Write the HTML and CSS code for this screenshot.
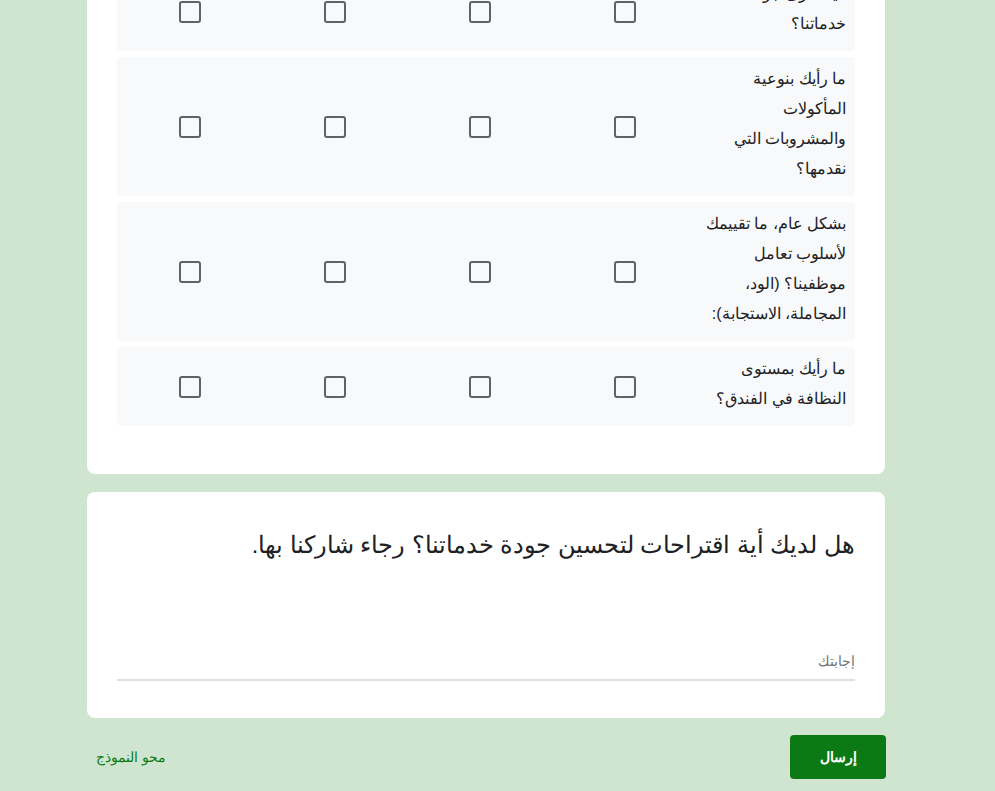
FILE: index.html
```html
<!DOCTYPE html>
<html lang="ar" dir="rtl">
<head>
<meta charset="utf-8">
<title>استبيان</title>
<link rel="stylesheet" href="styles.css">
</head>
<body>
<div class="page">
  <section class="card grid-card">
    <div class="row">
      <div class="label">كيف ترى جودة خدماتنا؟</div>
      <div class="cell"><span class="box"></span></div>
      <div class="cell"><span class="box"></span></div>
      <div class="cell"><span class="box"></span></div>
      <div class="cell"><span class="box"></span></div>
    </div>
    <div class="row">
      <div class="label">ما رأيك بنوعية المأكولات والمشروبات التي نقدمها؟</div>
      <div class="cell"><span class="box"></span></div>
      <div class="cell"><span class="box"></span></div>
      <div class="cell"><span class="box"></span></div>
      <div class="cell"><span class="box"></span></div>
    </div>
    <div class="row">
      <div class="label">بشكل عام، ما تقييمك لأسلوب تعامل موظفينا؟ (الود، المجاملة، الاستجابة):</div>
      <div class="cell"><span class="box"></span></div>
      <div class="cell"><span class="box"></span></div>
      <div class="cell"><span class="box"></span></div>
      <div class="cell"><span class="box"></span></div>
    </div>
    <div class="row">
      <div class="label">ما رأيك بمستوى النظافة في الفندق؟</div>
      <div class="cell"><span class="box"></span></div>
      <div class="cell"><span class="box"></span></div>
      <div class="cell"><span class="box"></span></div>
      <div class="cell"><span class="box"></span></div>
    </div>
  </section>

  <section class="card text-card">
    <h2 class="question">هل لديك أية اقتراحات لتحسين جودة خدماتنا؟ رجاء شاركنا بها.</h2>
    <input class="answer" type="text" placeholder="إجابتك">
  </section>

  <div class="footer">
    <button class="submit" type="button">إرسال</button>
    <a class="clear" href="#">محو النموذج</a>
  </div>
</div>
</body>
</html>
```
FILE: styles.css
```css
html, body {
  margin: 0;
  padding: 0;
}
body {
  background: #cfe5cf;
  font-family: "Liberation Sans", Arial, sans-serif;
  color: #202124;
  overflow: hidden;
}
.page {
  width: 798px;
  margin: -58px 110px 0 0;
}
.card {
  background: #fff;
  border-radius: 8px;
  box-sizing: border-box;
}
.grid-card {
  padding: 30px 30px 48px;
  display: flex;
  flex-direction: column;
  gap: 6px;
}
.row {
  display: grid;
  grid-template-columns: 158px repeat(4, 145px);
  background: #f8f9fa;
  border-radius: 4px;
}
.label {
  padding: 7px 9px 12px 5px;
  font-size: 16px;
  line-height: 30px;
  color: #202124;
}
.cell {
  display: flex;
  align-items: center;
  justify-content: center;
}
.box {
  display: block;
  width: 18px;
  height: 18px;
  border: 2px solid #5f6368;
  border-radius: 3px;
}
.text-card {
  margin-top: 18px;
  padding: 35px 30px 37px;
}
.question {
  margin: 0;
  font-size: 23.5px;
  font-weight: normal;
  line-height: 36px;
  color: #202124;
}
.answer {
  display: block;
  box-sizing: border-box;
  width: 100%;
  height: 38px;
  margin-top: 80px;
  border: none;
  border-bottom: 2px solid #e0e0e0;
  padding: 0;
  font-family: "Liberation Sans", Arial, sans-serif;
  font-size: 14px;
  background: transparent;
  outline: none;
}
.answer::placeholder {
  color: #70757a;
}
.footer {
  display: flex;
  justify-content: space-between;
  align-items: center;
  margin-top: 17px;
}
.submit {
  width: 96px;
  height: 44px;
  margin-right: -1px;
  background: #0b7a15;
  color: #fff;
  border: none;
  border-radius: 4px;
  font-family: "Liberation Sans", Arial, sans-serif;
  font-size: 14px;
  font-weight: bold;
}
.clear {
  margin-left: 9px;
  color: #0b7a15;
  text-decoration: none;
  font-size: 14px;
}
```
